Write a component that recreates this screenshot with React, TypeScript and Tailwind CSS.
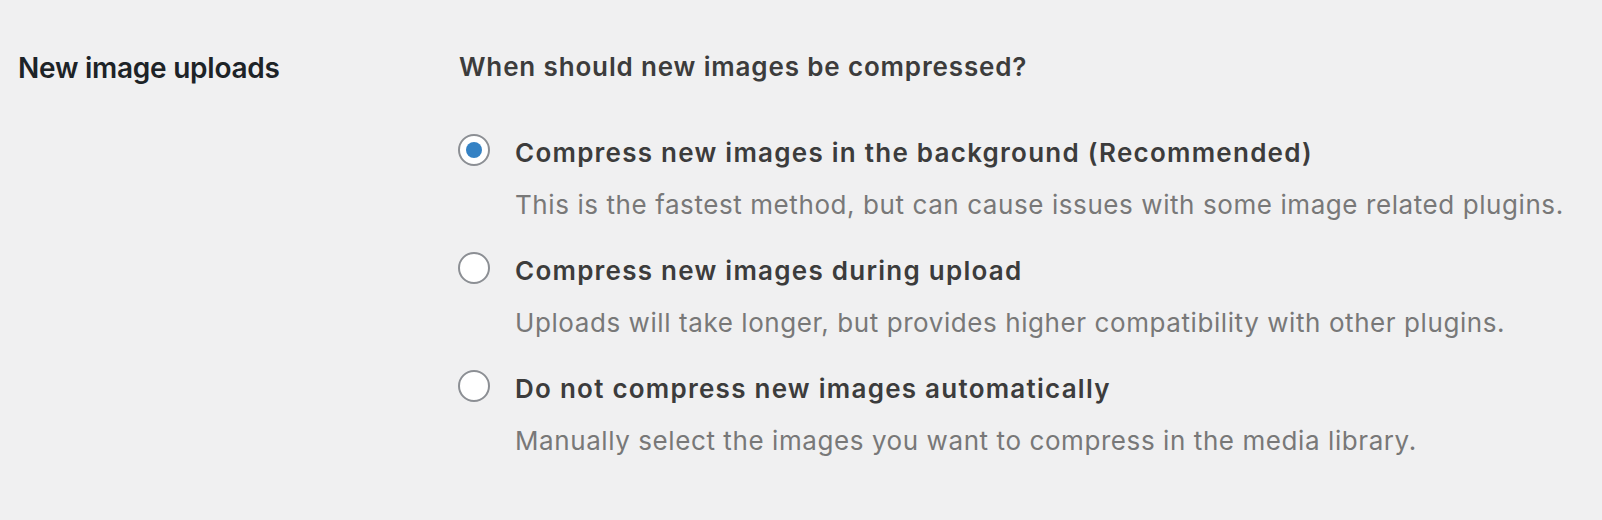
import React from "react";

const options = [
  {
    label: "Compress new images in the background (Recommended)",
    desc: "This is the fastest method, but can cause issues with some image related plugins.",
    checked: true,
  },
  {
    label: "Compress new images during upload",
    desc: "Uploads will take longer, but provides higher compatibility with other plugins.",
    checked: false,
  },
  {
    label: "Do not compress new images automatically",
    desc: "Manually select the images you want to compress in the media library.",
    checked: false,
  },
];

export default function App() {
  return (
    <div
      className="w-[1602px] h-[520px] bg-[#f0f0f1] overflow-hidden"
      style={{ fontFamily: "Inter, 'Noto Sans', sans-serif" }}
    >
      <div className="flex">
        <div className="w-[458px] shrink-0 pl-[18px] pt-[48px]">
          <h2 className="text-[28px] leading-[40px] font-semibold tracking-[-0.25px] text-[#1d2327]">
            New image uploads
          </h2>
        </div>
        <div className="flex-1 pt-[49px]">
          <p className="text-[26px] leading-[36px] font-semibold tracking-[0.85px] text-[#3c3c3c] pl-[1px]">
            When should new images be compressed?
          </p>
          <div className="mt-[50px] flex flex-col gap-[30px]">
            {options.map((o) => (
              <div key={o.label}>
                <label className="flex items-start gap-[25px]">
                  <span className="mt-[-1px] w-[32px] h-[32px] shrink-0 rounded-full border-2 border-[#8c8f94] bg-white flex items-center justify-center">
                    {o.checked && (
                      <span className="w-[16px] h-[16px] rounded-full bg-[#3582c4]" />
                    )}
                  </span>
                  <span className="text-[26px] leading-[36px] font-semibold tracking-[1.25px] text-[#3c3c3c]">
                    {o.label}
                  </span>
                </label>
                <p className="mt-[16px] pl-[57px] text-[26px] leading-[36px] tracking-[0.58px] text-[#787878]">
                  {o.desc}
                </p>
              </div>
            ))}
          </div>
        </div>
      </div>
    </div>
  );
}
